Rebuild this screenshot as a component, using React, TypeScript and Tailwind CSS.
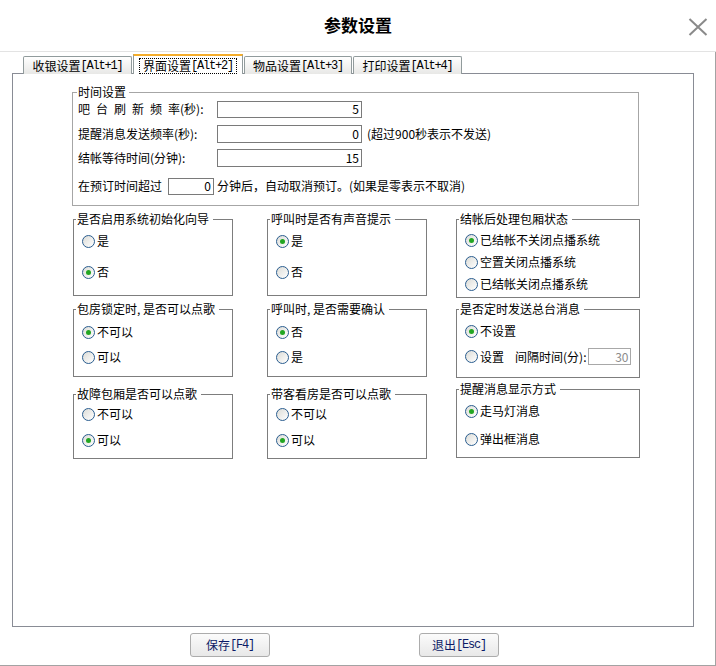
import React from "react";

function Mono({ children }: { children: React.ReactNode }) {
  return (
    <span className="font-['Liberation_Mono',monospace] text-[12px] tracking-[-1.2px]">
      {children}
    </span>
  );
}

function Radio({ checked, label }: { checked?: boolean; label: React.ReactNode }) {
  return (
    <div className="flex h-[16px] items-center gap-[2px] whitespace-nowrap">
      <span className="flex h-[13px] w-[13px] shrink-0 items-center justify-center rounded-full border border-[#2a5d8f] bg-gradient-to-br from-[#dcdcd7] to-[#ffffff]">
        {checked && <span className="h-[5px] w-[5px] rounded-full bg-[#22a622]" />}
      </span>
      <span>{label}</span>
    </div>
  );
}

function Group({
  title,
  className,
  inner,
  children,
}: {
  title: string;
  className: string;
  inner: string;
  children: React.ReactNode;
}) {
  return (
    <fieldset className={`border border-[#7d7d7d] ${className}`}>
      <legend className="ml-[2px] pl-[1px] pr-[4px] leading-[14px] whitespace-nowrap">{title}</legend>
      <div className={`flex flex-col pl-[8px] ${inner}`}>{children}</div>
    </fieldset>
  );
}

function Tab({ name, keys, active, w }: { name: string; keys: string; active?: boolean; w: string }) {
  if (active) {
    return (
      <div
        className={`relative z-10 flex h-[20px] ${w} items-start justify-center border-x border-t-2 border-x-[#919b9c] border-t-[#f5ad2a] bg-white pt-[2px]`}
      >
        <span className="flex h-[16px] items-center border border-dotted border-black px-[3px] whitespace-nowrap">
          {name}
          <Mono>{keys}</Mono>
        </span>
      </div>
    );
  }
  return (
    <div
      className={`flex h-[18px] ${w} items-center justify-center rounded-t-[2px] border border-b-0 border-[#919b9c] bg-gradient-to-b from-[#ffffff] to-[#e8e8e6] whitespace-nowrap`}
    >
      {name}
      <Mono>{keys}</Mono>
    </div>
  );
}

function Field({ value, w, h = "h-[18px]", disabled }: { value: string; w: string; h?: string; disabled?: boolean }) {
  return (
    <div
      className={`flex ${w} ${h} shrink-0 items-center justify-end border bg-white pr-[2px] ${
        disabled ? "border-[#a8a8a8] text-[#8c8c8c]" : "border-[#7a7a7a] text-black"
      }`}
    >
      {value}
    </div>
  );
}

function Button({ name, keys }: { name: string; keys: string }) {
  return (
    <div className="flex h-[24px] w-[80px] items-center justify-center rounded-[3px] border border-[#acacac] bg-gradient-to-b from-[#fbfbfb] to-[#e8e8e8] text-[#0c1a66] whitespace-nowrap">
      {name}
      <Mono>{keys}</Mono>
    </div>
  );
}

export default function App() {
  return (
    <div className="h-[666px] w-[716px] overflow-hidden bg-white font-['Noto_Sans_CJK_SC','Liberation_Sans',sans-serif] text-[12px] leading-[14px] text-black">
      {/* header */}
      <div className="grid h-[52px] grid-cols-[1fr_auto_1fr] items-center border-b border-[#e3e3e3]">
        <div />
        <div className="pb-[1px] text-[17px] font-bold leading-[20px]">参数设置</div>
        <div className="flex justify-end pr-[8px] pt-[2px]">
          <svg width="20" height="18" viewBox="0 0 20 18">
            <path d="M1.5 1 L18.5 17 M18.5 1 L1.5 17" stroke="#8a8a8a" strokeWidth="2" fill="none" />
          </svg>
        </div>
      </div>

      {/* body */}
      <div className="h-[614px] border-b border-r border-[#a3a3a3] pt-[2px]">
        {/* tabs */}
        <div className="relative z-10 -mb-px ml-[23px] flex h-[20px] items-end gap-[1px]">
          <Tab name="收银设置" keys="[Alt+1]" w="w-[109px]" />
          <Tab name="界面设置" keys="[Alt+2]" w="w-[110px]" active />
          <Tab name="物品设置" keys="[Alt+3]" w="w-[108px]" />
          <Tab name="打印设置" keys="[Alt+4]" w="w-[109px]" />
        </div>

        {/* panel */}
        <div className="ml-[12px] h-[554px] w-[682px] border border-[#898c95] bg-white pl-[59px] pt-[11px]">
          <fieldset className="h-[121px] w-[567px] border border-[#a6a6a6]">
            <legend className="ml-[4px] pl-[1px] pr-[3px] leading-[14px]">时间设置</legend>
            <div className="flex flex-col pl-[5px] pt-[1px]">
              <div className="flex h-[18px] items-center">
                <span className="w-[139px] whitespace-nowrap">
                  <span className="tracking-[6px]">吧台刷新频</span>率(秒):
                </span>
                <Field value="5" w="w-[145px]" h="h-[17px]" />
              </div>
              <div className="mt-[7px] flex h-[18px] items-center">
                <span className="w-[139px] whitespace-nowrap">提醒消息发送频率(秒):</span>
                <Field value="0" w="w-[145px]" />
                <span className="ml-[5px] whitespace-nowrap">(超过900秒表示不发送)</span>
              </div>
              <div className="mt-[6px] flex h-[18px] items-center">
                <span className="w-[139px] whitespace-nowrap">结帐等待时间(分钟):</span>
                <Field value="15" w="w-[145px]" />
              </div>
              <div className="mt-[10px] flex h-[18px] items-center">
                <span className="whitespace-nowrap">在预订时间超过</span>
                <div className="ml-[6px]">
                  <Field value="0" w="w-[46px]" h="h-[17px]" />
                </div>
                <span className="ml-[3px] whitespace-nowrap">分钟后，自动取消预订。(如果是零表示不取消)</span>
              </div>
            </div>
          </fieldset>

          <div className="ml-[1px] mt-[6px] flex items-start">
            {/* col 1 */}
            <div className="flex w-[160px] flex-col">
              <Group title="是否启用系统初始化向导" className="h-[84px]" inner="pt-[7px] gap-[15px]">
                <Radio label="是" />
                <Radio label="否" checked />
              </Group>
              <Group title="包房锁定时, 是否可以点歌" className="mt-[6px] h-[75px]" inner="pt-[8px] gap-[9px]">
                <Radio label="不可以" checked />
                <Radio label="可以" />
              </Group>
              <Group title="故障包厢是否可以点歌" className="mt-[10px] h-[72px]" inner="pt-[5px] gap-[10px]">
                <Radio label="不可以" />
                <Radio label="可以" checked />
              </Group>
            </div>

            {/* col 2 */}
            <div className="ml-[34px] flex w-[160px] flex-col">
              <Group title="呼叫时是否有声音提示" className="h-[84px]" inner="pt-[7px] gap-[15px]">
                <Radio label="是" checked />
                <Radio label="否" />
              </Group>
              <Group title="呼叫时, 是否需要确认" className="mt-[6px] h-[75px]" inner="pt-[8px] gap-[9px]">
                <Radio label="否" checked />
                <Radio label="是" />
              </Group>
              <Group title="带客看房是否可以点歌" className="mt-[10px] h-[72px]" inner="pt-[5px] gap-[10px]">
                <Radio label="不可以" />
                <Radio label="可以" checked />
              </Group>
            </div>

            {/* col 3 */}
            <div className="ml-[29px] flex w-[184px] flex-col">
              <Group title="结帐后处理包厢状态" className="h-[86px]" inner="pt-[6px] gap-[6px]">
                <Radio label="已结帐不关闭点播系统" checked />
                <Radio label="空置关闭点播系统" />
                <Radio label="已结帐关闭点播系统" />
              </Group>
              <Group title="是否定时发送总台消息" className="mt-[4px] h-[76px]" inner="pt-[7px] gap-[9px]">
                <Radio label="不设置" checked />
                <div className="flex h-[17px] items-center">
                  <Radio label="设置" />
                  <span className="ml-[11px] whitespace-nowrap">间隔时间(分):</span>
                  <div className="ml-[2px]">
                    <Field value="30" w="w-[43px]" h="h-[17px]" disabled />
                  </div>
                </div>
              </Group>
              <Group title="提醒消息显示方式" className="mt-[4px] h-[76px]" inner="pt-[7px] gap-[12px]">
                <Radio label="走马灯消息" checked />
                <Radio label="弹出框消息" />
              </Group>
            </div>
          </div>
        </div>

        {/* buttons */}
        <div className="mt-[6px] flex pl-[190px]">
          <Button name="保存" keys="[F4]" />
          <div className="ml-[149px]">
            <Button name="退出" keys="[Esc]" />
          </div>
        </div>
      </div>
    </div>
  );
}
